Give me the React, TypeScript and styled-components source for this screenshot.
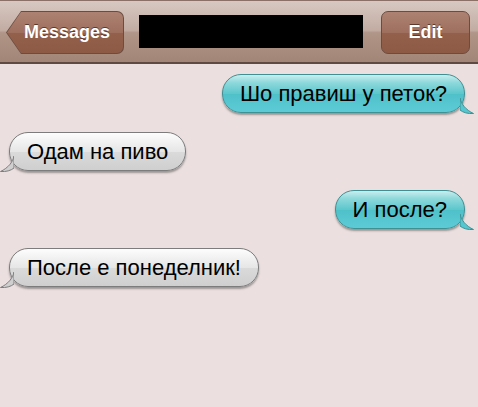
import { FC } from 'react'
import styled, { createGlobalStyle, css } from 'styled-components'

/**
 * Data
 */

interface Message {
  id: number
  text: string
  mine: boolean
}

const messages: Message[] = [
  { id: 1, text: 'Шо правиш у петок?', mine: true },
  { id: 2, text: 'Одам на пиво', mine: false },
  { id: 3, text: 'И после?', mine: true },
  { id: 4, text: 'После е понеделник!', mine: false }
]

/**
 * Component
 */

const App: FC = () => {
  return (
    <>
      <GlobalStyle />
      <StyledScreen>
        <StyledNavBar>
          <StyledBackButton>
            <StyledBackInner>Messages</StyledBackInner>
          </StyledBackButton>
          <StyledTitleBlock />
          <StyledEditButton>Edit</StyledEditButton>
        </StyledNavBar>
        <StyledThread>
          {messages.map(m => (
            <StyledRow key={m.id} mine={m.mine}>
              <StyledBubble mine={m.mine}>
                <StyledTail mine={m.mine} viewBox="0 0 14 16">
                  {m.mine ? (
                    <path
                      d="M0 0 C1 6 6 12 13.5 15.5 C8 16 3 14.5 0 12 Z"
                      fill="#55c7d0"
                      stroke="#3f8f93"
                      strokeWidth="1"
                    />
                  ) : (
                    <path
                      d="M14 0 C13 6 8 12 0.5 15.5 C6 16 11 14.5 14 12 Z"
                      fill="#cfcfcf"
                      stroke="#7c7c7c"
                      strokeWidth="1"
                    />
                  )}
                </StyledTail>
                <StyledText>{m.text}</StyledText>
              </StyledBubble>
            </StyledRow>
          ))}
        </StyledThread>
      </StyledScreen>
    </>
  )
}

export default App

/**
 * Styled Component
 */

const GlobalStyle = createGlobalStyle`
  html, body {
    margin: 0;
    padding: 0;
    background: #ebe0df;
  }
`

const StyledScreen = styled.div`
  width: 478px;
  height: 407px;
  background: #ebe0df;
  overflow: hidden;
  font-family: 'Liberation Sans', Arial, sans-serif;
`

const StyledNavBar = styled.header`
  height: 64px;
  display: flex;
  align-items: center;
  padding: 0 8px 0 6px;
  box-sizing: border-box;
  background: linear-gradient(#d7c9c2 0%, #c2aca2 48%, #b09688 52%, #a28576 100%);
  border-top: 1px solid #8a7066;
  border-bottom: 2px solid #5e4a42;
`

const buttonFace = css`
  background: linear-gradient(#ad8272 0%, #9e6f5d 50%, #93604c 52%, #8d5a45 100%);
  color: #fff;
  font-weight: bold;
  font-size: 18px;
  text-shadow: 0 -1px 0 #5a3a2e;
`

const StyledBackButton = styled.div`
  width: 118px;
  height: 43px;
  flex: none;
  background: #6b4c40;
  border-radius: 0 7px 7px 0;
  clip-path: polygon(15px 0, 100% 0, 100% 100%, 15px 100%, 0 50%);
  padding: 1px;
  box-sizing: border-box;
  margin-top: 2px;
`

const StyledBackInner = styled.div`
  ${buttonFace};
  height: 100%;
  border-radius: 0 6px 6px 0;
  clip-path: polygon(14px 0, 100% 0, 100% 100%, 14px 100%, 0 50%);
  display: flex;
  align-items: center;
  justify-content: center;
  padding-left: 4px;
  box-sizing: border-box;
`

const StyledTitleBlock = styled.div`
  width: 224px;
  height: 33px;
  background: #000;
  margin: 0 18px 0 15px;
  flex: none;
`

const StyledEditButton = styled.div`
  ${buttonFace};
  width: 89px;
  height: 43px;
  margin-top: 2px;
  box-sizing: border-box;
  border: 1px solid #6b4c40;
  border-radius: 7px;
  display: flex;
  align-items: center;
  justify-content: center;
`

const StyledThread = styled.main`
  display: flex;
  flex-direction: column;
  gap: 19px;
  padding: 10px 13px 0 9px;
`

const StyledRow = styled.div<{ mine: boolean }>`
  display: flex;
  justify-content: ${({ mine }) => (mine ? 'flex-end' : 'flex-start')};
`

const StyledBubble = styled.div<{ mine: boolean }>`
  position: relative;
  height: 39px;
  box-sizing: border-box;
  border-radius: 19px;
  padding: 0 17px;
  display: flex;
  align-items: center;
  box-shadow: 0 2px 2px rgba(60, 60, 60, 0.45);
  ${({ mine }) =>
    mine
      ? css`
          border: 1px solid #3f8f93;
          background: linear-gradient(
            #c9eeee 0%,
            #8fd9db 20%,
            #5cc7cc 50%,
            #4fc1c9 52%,
            #5dcbd6 100%
          );
        `
      : css`
          border: 1px solid #7c7c7c;
          background: linear-gradient(
            #fdfdfd 0%,
            #f1f1f1 25%,
            #e6e6e6 50%,
            #dadada 52%,
            #cfcfcf 100%
          );
        `}
`

const StyledTail = styled.svg<{ mine: boolean }>`
  position: absolute;
  width: 14px;
  height: 16px;
  bottom: -2px;
  ${({ mine }) => (mine ? 'right: -10px;' : 'left: -10px;')}
`

const StyledText = styled.span`
  position: relative;
  font-size: 22px;
  color: #000;
  white-space: nowrap;
`
